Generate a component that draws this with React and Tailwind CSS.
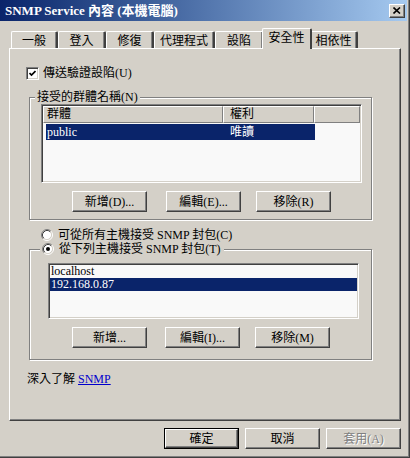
import React from 'react';

const Btn = ({ children, disabled = false, className = '' }) => (
  <button
    type="button"
    className={`w-[75px] h-[21px] bg-[#d4d0c8] border border-t-white border-l-white border-r-[#404040] border-b-[#404040] shadow-[inset_-1px_-1px_0_#808080] flex items-center justify-center text-[12px] leading-none ${
      disabled ? 'text-[#808080] [text-shadow:1px_1px_0_#fff]' : 'text-black'
    } ${className}`}
  >
    {children}
  </button>
);

const Radio = ({ checked }) => (
  <svg width="12" height="12" viewBox="0 0 12 12" className="shrink-0">
    <circle cx="6" cy="6" r="4.5" fill="#fff" />
    <path d="M2.11 9.89 A5.5 5.5 0 0 1 9.89 2.11" stroke="#808080" fill="none" />
    <path d="M9.89 2.11 A5.5 5.5 0 0 1 2.11 9.89" stroke="#fff" fill="none" />
    <path d="M2.82 9.18 A4.5 4.5 0 0 1 9.18 2.82" stroke="#404040" fill="none" />
    <path d="M9.18 2.82 A4.5 4.5 0 0 1 2.82 9.18" stroke="#d4d0c8" fill="none" />
    {checked && <circle cx="6" cy="6" r="2" fill="#000" />}
  </svg>
);

const Tab = ({ label, w, active }) =>
  active ? (
    <div
      className={`${w} -mx-[2px] -mb-px h-[21px] relative z-10 bg-[#d4d0c8] border-t border-l border-t-white border-l-white border-r-2 border-r-[#404040] rounded-t-[2px] flex items-start justify-center pt-[2px] text-[12px] leading-[14px]`}
    >
      {label}
    </div>
  ) : (
    <div
      className={`${w} h-[17px] bg-[#d4d0c8] border-t border-l border-t-white border-l-white border-r-2 border-r-[#404040] shadow-[inset_-1px_0_0_#808080] rounded-t-[2px] flex items-start justify-center pt-[2px] text-[12px] leading-[14px]`}
    >
      {label}
    </div>
  );

const GroupBox = ({ className = '', children }) => (
  <div className={`relative border border-[#808080] shadow-[inset_1px_1px_0_#fff,1px_1px_0_#fff] ${className}`}>
    {children}
  </div>
);

export default function App() {
  return (
    <div className="w-[410px] h-[458px] bg-[#d4d0c8] flex flex-col overflow-hidden text-black font-[Liberation_Serif,Noto_Sans_CJK_TC,serif] shadow-[inset_-1px_-1px_0_#404040,inset_-2px_-2px_0_#808080]">
      {/* Title bar */}
      <div className="h-[21px] mr-[3px] shrink-0 bg-linear-to-r from-[#0a246a] to-[#a6caf0] flex items-center justify-between pl-[5px] pr-[2px]">
        <span className="text-white font-bold text-[13px] leading-none whitespace-nowrap">SNMP Service 內容 (本機電腦)</span>
        <div className="w-[16px] h-[14px] bg-[#d4d0c8] border border-t-white border-l-white border-r-[#404040] border-b-[#404040] shadow-[inset_-1px_-1px_0_#808080] flex items-center justify-center">
          <svg width="8" height="7" viewBox="0 0 8 7">
            <path d="M0.5 0.5 L7 6.5 M7 0.5 L0.5 6.5" stroke="#000" strokeWidth="1.6" />
          </svg>
        </div>
      </div>

      {/* Tabs */}
      <div className="h-[27px] shrink-0 flex items-end pl-[11px]">
        <Tab label="一般" w="w-[47px]" />
        <Tab label="登入" w="w-[48px]" />
        <Tab label="修復" w="w-[48px]" />
        <Tab label="代理程式" w="w-[61px]" />
        <Tab label="設陷" w="w-[49px]" />
        <Tab label="安全性" w="w-[50px]" active />
        <Tab label="相依性" w="w-[48px]" />
      </div>

      {/* Panel */}
      <div className="mx-[9px] h-[373px] shrink-0 border border-t-white border-l-white border-r-[#404040] border-b-[#404040] shadow-[inset_-1px_-1px_0_#808080] flex flex-col items-start text-[12px] leading-[14px]">
        <div className="mt-[17px] ml-[16px] flex items-center gap-[4px]">
          <div className="w-[13px] h-[13px] bg-white border border-t-[#808080] border-l-[#808080] border-r-white border-b-white shadow-[inset_1px_1px_0_#404040,inset_-1px_-1px_0_#d4d0c8] flex items-center justify-center">
            <svg width="7" height="7" viewBox="0 0 7 7">
              <path d="M0.5 3 L2.5 5 L6.5 1" stroke="#000" strokeWidth="1.7" fill="none" />
            </svg>
          </div>
          <span>傳送驗證設陷(U)</span>
        </div>

        {/* Community names */}
        <GroupBox className="mt-[17px] ml-[19px] w-[343px] h-[123px]">
          <span className="absolute -top-[8px] left-[5px] px-[2px] bg-[#d4d0c8]">接受的群體名稱(N)</span>
          <div className="mt-[6px] ml-[11px] w-[321px] h-[79px] bg-[#f9f9f9] border border-t-[#808080] border-l-[#808080] border-r-white border-b-white shadow-[inset_1px_1px_0_#404040,inset_-1px_-1px_0_#d4d0c8] p-[1px] flex flex-col">
            <div className="flex h-[17px] shrink-0">
              <div className="w-[180px] bg-[#d4d0c8] border border-t-white border-l-white border-r-[#808080] border-b-[#808080] pl-[3px] leading-[14px]">群體</div>
              <div className="w-[91px] bg-[#d4d0c8] border border-t-white border-l-white border-r-[#808080] border-b-[#808080] pl-[6px] leading-[14px]">權利</div>
              <div className="flex-1 bg-[#d4d0c8] border border-t-white border-l-white border-r-[#808080] border-b-[#808080]"></div>
            </div>
            <div className="ml-[3px] mt-[1px] w-[269px] h-[16px] bg-[#0a246a] text-white flex items-center">
              <span className="w-[177px] pl-[1px]">public</span>
              <span className="pl-[7px]">唯讀</span>
            </div>
          </div>
          <div className="mt-[8px] flex">
            <Btn className="ml-[42px]">新增(D)...</Btn>
            <Btn className="ml-[19px]">編輯(E)...</Btn>
            <Btn className="ml-[15px]">移除(R)</Btn>
          </div>
        </GroupBox>

        <div className="mt-[8px] ml-[31px] flex items-center gap-[5px] h-[13px]">
          <Radio />
          <span>可從所有主機接受 SNMP 封包(C)</span>
        </div>

        {/* Accepted hosts */}
        <GroupBox className="mt-[8px] ml-[19px] w-[343px] h-[111px]">
          <div className="absolute -top-[8px] left-[10px] pl-[2px] pr-[3px] bg-[#d4d0c8] flex items-center gap-[5px] h-[14px]">
            <Radio checked />
            <span>從下列主機接受 SNMP 封包(T)</span>
          </div>
          <div className="mt-[13px] ml-[18px] w-[311px] h-[56px] bg-[#f9f9f9] border border-t-[#808080] border-l-[#808080] border-r-white border-b-white shadow-[inset_1px_1px_0_#404040,inset_-1px_-1px_0_#d4d0c8] p-[1px] flex flex-col">
            <div className="h-[13px] leading-[13px] pl-[1px]">localhost</div>
            <div className="h-[13px] leading-[13px] pl-[1px] bg-[#0a246a] text-white">192.168.0.87</div>
          </div>
          <div className="mt-[8px] flex">
            <Btn className="ml-[42px]">新增...</Btn>
            <Btn className="ml-[18px]">編輯(I)...</Btn>
            <Btn className="ml-[15px]">移除(M)</Btn>
          </div>
        </GroupBox>

        <div className="mt-[12px] ml-[17px]">
          深入了解 <span className="text-[#0000cc] underline">SNMP</span>
        </div>
      </div>

      {/* Dialog buttons */}
      <div className="mt-[7px] pr-[9px] flex justify-end gap-[6px]">
        <div className="w-[75px] h-[21px] border border-black">
          <div className="w-full h-full bg-[#d4d0c8] border border-t-white border-l-white border-r-[#404040] border-b-[#404040] shadow-[inset_-1px_-1px_0_#808080] flex items-center justify-center text-[12px] leading-none">
            確定
          </div>
        </div>
        <Btn>取消</Btn>
        <Btn disabled>套用(A)</Btn>
      </div>
    </div>
  );
}
